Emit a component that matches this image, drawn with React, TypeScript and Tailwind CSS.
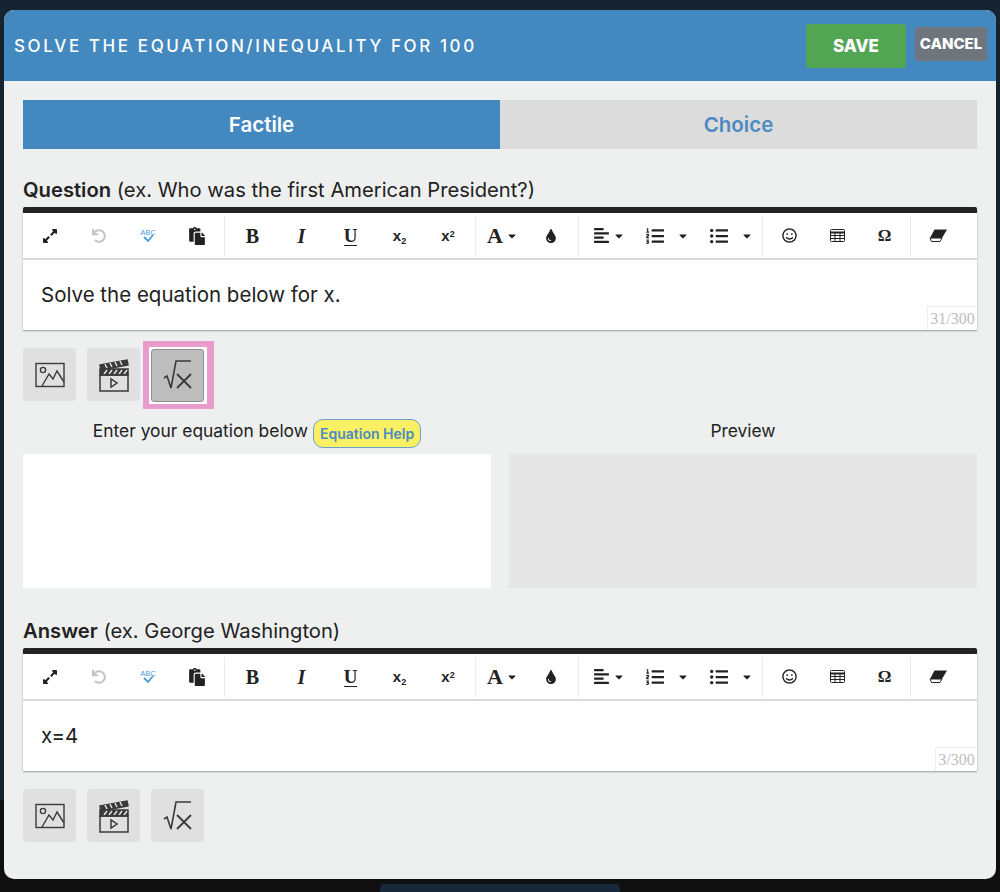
import { FaAlignLeft, FaCaretDown, FaExpandAlt, FaListOl, FaListUl, FaPaste, FaRegSmile, FaTint, FaUndo } from "react-icons/fa";

const sans = "font-['Inter','Noto_Sans',sans-serif]";

function Sep() {
  return <div className="w-px h-[40px] bg-[#ececec] mx-[3px]" />;
}

function Btn({ w = "w-[49px]", children }: { w?: string; children: React.ReactNode }) {
  return <div className={`${w} h-full flex items-center justify-center shrink-0 text-[#222222]`}>{children}</div>;
}

function Serif({ children, className = "" }: { children: React.ReactNode; className?: string }) {
  return <span className={`font-['Liberation_Serif',serif] leading-none ${className}`}>{children}</span>;
}

function Script({ sub }: { sub?: boolean }) {
  return (
    <span className="font-['Liberation_Sans',sans-serif] font-bold text-[15px] leading-none text-[#222222]">
      x<span className={`text-[9px] relative ${sub ? "top-[3px]" : "top-[-4px]"}`}>2</span>
    </span>
  );
}

function Spell() {
  return (
    <svg width="20" height="16" viewBox="0 0 20 16" fill="none">
      <text x="10" y="7" textAnchor="middle" fontSize="7.5" fontFamily="Liberation Sans, sans-serif" fill="#4d9ad6">ABC</text>
      <path d="M6 9l4 4 5-6" stroke="#4d9ad6" strokeWidth="1.8" />
    </svg>
  );
}

function GridIcon() {
  return (
    <svg width="15" height="13" viewBox="0 0 15 13" fill="none" stroke="#222222">
      <rect x="0.5" y="0.5" width="14" height="12" rx="1" />
      <path d="M0.5 3.5h14" strokeWidth="2" />
      <path d="M0.5 6.5h14M0.5 9.5h14M5 3v10M10 3v10" />
    </svg>
  );
}

function EraserIcon() {
  return (
    <svg width="18" height="13" viewBox="0 0 18 13">
      <path d="M5.5 0.5H18L13 9H1z" fill="#222222" />
      <path d="M1 9h12l-2 3.5H2.5z" fill="#fff" stroke="#222222" />
    </svg>
  );
}

function Toolbar() {
  return (
    <div className="h-[45px] flex items-center pl-[2px] border-b-2 border-[#d9d9d9] box-content">
      <Btn><FaExpandAlt size={16} /></Btn>
      <Btn><FaUndo size={14} className="text-[#c4c4c4]" /></Btn>
      <Btn><Spell /></Btn>
      <Btn><FaPaste size={18} /></Btn>
      <Sep />
      <Btn><Serif className="font-bold text-[20px]">B</Serif></Btn>
      <Btn><Serif className="font-bold italic text-[20px]">I</Serif></Btn>
      <Btn><Serif className="font-bold text-[19px] border-b border-[#222222] leading-[16px]">U</Serif></Btn>
      <Btn><Script sub /></Btn>
      <Btn w="w-[48px]"><Script /></Btn>
      <Sep />
      <Btn w="w-[47px]">
        <Serif className="font-bold text-[22px]">A</Serif>
        <FaCaretDown size={12} className="ml-[3px]" />
      </Btn>
      <Btn><FaTint size={14} /></Btn>
      <Sep />
      <Btn w="w-[54px]">
        <FaAlignLeft size={17} />
        <FaCaretDown size={12} className="ml-[3px]" />
      </Btn>
      <Btn w="w-[38px]"><FaListOl size={18} /></Btn>
      <Btn w="w-[18px]"><FaCaretDown size={12} /></Btn>
      <div className="w-[8px]" />
      <Btn w="w-[38px]"><FaListUl size={18} /></Btn>
      <Btn w="w-[21px] pr-[3px]"><FaCaretDown size={12} /></Btn>
      <Sep />
      <Btn w="w-[47px]"><FaRegSmile size={15} /></Btn>
      <Btn><GridIcon /></Btn>
      <Btn w="w-[45px]"><Serif className="font-bold text-[17px]">Ω</Serif></Btn>
      <Sep />
      <Btn w="w-[48px]"><EraserIcon /></Btn>
    </div>
  );
}

function Editor({ text, count, counterW }: { text: string; count: string; counterW: string }) {
  return (
    <div className="bg-white border-t-[6px] border-[#222222] rounded-t-[2px] shadow-[0_1px_2px_rgba(0,0,0,0.35)]">
      <Toolbar />
      <div className="relative h-[70px] px-[18px] pt-[21px] text-[20.5px] leading-[28px] text-[#222222]">
        {text}
        <div className={`absolute right-0 bottom-0 ${counterW} h-[24px] border border-[#eeeeee] border-r-0 border-b-0 rounded-tl-[2px] text-center font-['Liberation_Serif',serif] text-[16px] leading-[24px] text-[#bdbdbd]`}>
          {count}
        </div>
      </div>
    </div>
  );
}

function ImageIcon() {
  return (
    <svg width="30" height="26" viewBox="0 0 30 26" fill="none" stroke="#3a3a3a" strokeWidth="1.4">
      <rect x="1" y="1.5" width="28" height="23" />
      <circle cx="8" cy="8" r="2.6" />
      <path d="M7 24l7-12 4 5 4-8 7 11" />
    </svg>
  );
}

function ClapIcon() {
  return (
    <svg width="30" height="34" viewBox="0 0 30 34" fill="none" stroke="#3a3a3a" strokeWidth="1.5">
      <path d="M1 7l27-5 1 5-27 5z" fill="#3a3a3a" />
      <path d="M6 6l2 4M11 5l2 4M16 4l2 4M21 3l2 4" stroke="#e0e0e0" strokeWidth="1.5" />
      <rect x="1" y="11" width="28" height="6" fill="#3a3a3a" />
      <path d="M5 16l3-4M10 16l3-4M15 16l3-4M20 16l3-4M25 16l3-4" stroke="#e0e0e0" strokeWidth="1.5" />
      <rect x="1" y="17" width="28" height="16" />
      <path d="M12 21v8l6-4z" />
    </svg>
  );
}

function RootIcon() {
  return (
    <svg width="30" height="30" viewBox="0 0 30 30" fill="none" stroke="#3a3a3a" strokeWidth="1.6">
      <path d="M1 18l3-2 4 12 5-27h15" />
      <path d="M14 14l14 14M28 14L14 28" strokeWidth="1.8" />
    </svg>
  );
}

function MediaBtn({ active, children }: { active?: boolean; children: React.ReactNode }) {
  return (
    <div className={`w-[53px] h-[53px] rounded-[3px] flex items-center justify-center ${active ? "bg-[#bdbdbd] border border-[#8f8f8f]" : "bg-[#e0e0e0]"}`}>
      {children}
    </div>
  );
}

function MediaRow({ highlight }: { highlight?: boolean }) {
  return (
    <div className="flex gap-[11px] items-center">
      <MediaBtn><ImageIcon /></MediaBtn>
      <MediaBtn><ClapIcon /></MediaBtn>
      <div className={highlight ? "border-l-[6px] border-r-[7px] border-t-[6px] border-b-[5px] border-[#e89ccb] bg-white pl-[2px] pr-[3px] py-[2px] -m-[8px]" : ""}>
        <MediaBtn active={highlight}><RootIcon /></MediaBtn>
      </div>
    </div>
  );
}

export default function App() {
  return (
    <div className={`relative w-[1000px] h-[892px] overflow-hidden flex flex-col ${sans}`}>
      <div className="h-[800px] bg-[#162330]" />
      <div className="flex-1 bg-[#0f0f0f] flex justify-center items-end">
        <div className="w-[240px] h-[8px] bg-[#16283a] rounded-t-[4px]" />
      </div>

      <div className="absolute left-[4px] top-[10px] w-[992px] h-[869px] rounded-[10px] overflow-hidden bg-[#eef0f0]">
        <header className="h-[71px] bg-[#4388bf] flex items-center pl-[10px] pr-[9px]">
          <h1 className="flex-1 text-white text-[17px] font-medium tracking-[2.6px] leading-none pt-[2px]">
            SOLVE THE EQUATION/INEQUALITY FOR 100
          </h1>
          <button className="w-[100px] h-[44px] pt-[2px] bg-[#52a552] rounded-[3px] text-white text-[17px] font-extrabold mr-[9px]">SAVE</button>
          <button className="w-[72px] h-[34px] mt-[-3px] bg-[#6f757d] rounded-[3px] text-white text-[15px] font-extrabold">CANCEL</button>
        </header>

        <div className="px-[19px] pt-[19px]">
          <div className="flex h-[49px] text-[20.5px] font-semibold">
            <div className="flex-1 bg-[#4388bf] text-white flex items-center justify-center pt-[2px]">Factile</div>
            <div className="flex-1 bg-[#dbdcdb] text-[#4d8ac2] flex items-center justify-center pt-[2px]">Choice</div>
          </div>

          <p className="mt-[27px] h-[31px] text-[20.2px] leading-[28px] text-[#222222]">
            <b className="font-semibold">Question</b> (ex. Who was the first American President?)
          </p>
          <Editor text="Solve the equation below for x." count="31/300" counterW="w-[50px]" />

          <div className="mt-[18px]"><MediaRow highlight /></div>

          <div className="flex gap-[18px] mt-[17px]">
            <div className="flex-1">
              <div className="h-[36px] pb-[10px] flex items-center justify-center text-[17.4px] text-[#222222] gap-[5px]">
                Enter your equation below
                <span className="h-[29px] px-[6px] rounded-[10px] border border-[#6f9fca] bg-[#f9f163] text-[#4d8ac2] text-[14px] font-semibold flex items-center mt-[5px]">Equation Help</span>
              </div>
              <div className="h-[134px] bg-white" />
            </div>
            <div className="flex-1">
              <div className="h-[36px] pb-[10px] flex items-center justify-center text-[17.4px] text-[#222222]">Preview</div>
              <div className="h-[134px] bg-[#e5e6e5]" />
            </div>
          </div>

          <p className="mt-[29px] h-[31px] text-[20.2px] leading-[28px] text-[#222222]">
            <b className="font-semibold">Answer</b> (ex. George Washington)
          </p>
          <Editor text="x=4" count="3/300" counterW="w-[42px]" />

          <div className="mt-[18px]"><MediaRow /></div>
        </div>
      </div>
    </div>
  );
}
